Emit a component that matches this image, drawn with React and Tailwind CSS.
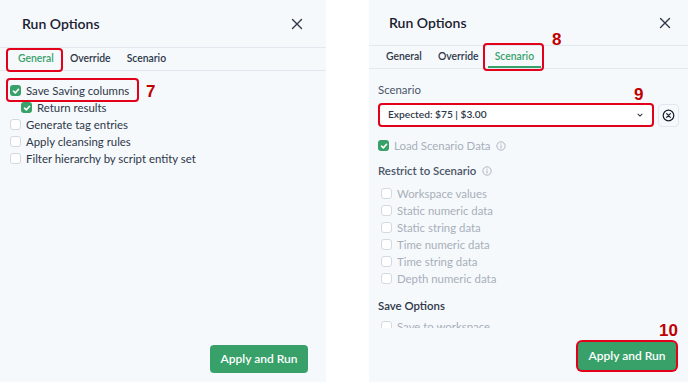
import React from "react";

const FONT = { fontFamily: "Lato, 'Open Sans', sans-serif" };

function Box({ checked }) {
  if (checked) {
    return (
      <span className="w-[11px] h-[11px] rounded-[3px] bg-[#38a169] flex items-center justify-center shrink-0">
        <svg width="8" height="8" viewBox="0 0 12 12">
          <path d="M2.3 6.3 L5 8.8 L9.8 3.4" stroke="white" strokeWidth="2.4" fill="none" strokeLinecap="round" strokeLinejoin="round" />
        </svg>
      </span>
    );
  }
  return <span className="w-[11px] h-[11px] rounded-[3px] border-[1.5px] border-[#d3d9e1] bg-white shrink-0" />;
}

function Row({ label, checked, indent, disabled, info }) {
  return (
    <div className={`flex items-center h-[17px] ${indent ? "pl-[11px]" : ""}`}>
      <Box checked={checked} />
      <span className={`ml-[5px] text-[11.4px] leading-[17px] ${disabled ? "text-[#a7afba]" : "text-[#2d3748]"}`}>{label}</span>
      {info && <Info className="ml-[6px]" />}
    </div>
  );
}

function Info({ className = "" }) {
  return (
    <svg className={className} width="10" height="10" viewBox="0 0 12 12">
      <circle cx="6" cy="6" r="5" fill="none" stroke="#a0aab6" strokeWidth="1" />
      <circle cx="6" cy="3.6" r="0.7" fill="#a0aab6" />
      <path d="M6 5.3 V8.8" stroke="#a0aab6" strokeWidth="1.1" />
    </svg>
  );
}

function Close() {
  return (
    <svg width="12" height="12" viewBox="0 0 12 12">
      <path d="M1.5 1.5 L10.5 10.5 M10.5 1.5 L1.5 10.5" stroke="#2d3748" strokeWidth="1.4" strokeLinecap="round" />
    </svg>
  );
}

function Tabs({ active, pl, underline }) {
  const tabs = ["General", "Override", "Scenario"];
  return (
    <div className={`h-[23px] border-b border-[#e2e8f0] flex items-stretch ${pl}`}>
      {tabs.map((t) => (
        <div key={t} className={`px-[8px] flex items-center text-[10.4px] font-semibold relative ${t === active ? "text-[#38a169]" : "text-[#2d3748]"}`}>
          {t}
          {t === active && underline && <span className="absolute left-[1px] right-[1px] bottom-[0px] h-[2px] bg-[#38a169]" />}
        </div>
      ))}
    </div>
  );
}

function ApplyBtn({ ring }) {
  return (
    <button className={`w-[98px] h-[28px] rounded-[4px] bg-[#38a169] text-white text-[12px] font-semibold flex items-center justify-center ${ring ? "ring-2 ring-[#e3001b]" : ""}`}>
      Apply and Run
    </button>
  );
}

export default function App() {
  return (
    <div className="relative w-[688px] h-[382px] bg-white flex overflow-hidden" style={FONT}>
      {/* Left panel */}
      <div className="w-[326px] h-[382px] bg-[#f6f9fc] flex flex-col">
        <div className="h-[48px] border-b border-[#e2e8f0] flex items-center justify-between pl-[22px] pr-[23px]">
          <span className="text-[14px] font-semibold text-[#1a202c]">Run Options</span>
          <Close />
        </div>
        <Tabs active="General" pl="pl-[10px]" />
        <div className="flex-1 pt-[11px] pl-[10px] flex flex-col">
          <Row label="Save Saving columns" checked />
          <Row label="Return results" checked indent />
          <Row label="Generate tag entries" />
          <Row label="Apply cleansing rules" />
          <Row label="Filter hierarchy by script entity set" />
        </div>
        <div className="flex justify-end pr-[18px] pb-[9px]">
          <ApplyBtn />
        </div>
      </div>

      <div className="w-[43px]" />

      {/* Right panel */}
      <div className="w-[319px] h-[382px] bg-[#f6f9fc] flex flex-col">
        <div className="h-[46px] border-b border-[#e2e8f0] flex items-center justify-between pl-[20px] pr-[17px]">
          <span className="text-[14px] font-semibold text-[#1a202c]">Run Options</span>
          <Close />
        </div>
        <Tabs active="Scenario" pl="pl-[9px]" underline />
        <div className="h-[259px] overflow-hidden pt-[13px] pl-[9px] pr-[9px] flex flex-col">
          <div className="text-[11.4px] leading-[16px] text-[#4a5568]">Scenario</div>
          <div className="mt-[5px] flex items-center gap-[4px]">
            <div className="flex-1 h-[24px] rounded-[4px] border-2 border-[#e3001b] bg-white flex items-center justify-between pl-[8px] pr-[8px]">
              <span className="text-[10.2px] font-semibold text-[#2d3748]">Expected: $75 | $3.00</span>
              <svg width="8" height="8" viewBox="0 0 10 10">
                <path d="M2.5 3.8 L5 6.3 L7.5 3.8" stroke="#2d3748" strokeWidth="1.3" fill="none" strokeLinecap="round" strokeLinejoin="round" />
              </svg>
            </div>
            <div className="w-[21px] h-[23px] rounded-[4px] border border-[#e2e8f0] bg-[#f6f9fc] flex items-center justify-center">
              <svg width="13" height="13" viewBox="0 0 14 14">
                <circle cx="7" cy="7" r="5.7" fill="none" stroke="#1a202c" strokeWidth="1.3" />
                <path d="M5 5 L9 9 M9 5 L5 9" stroke="#1a202c" strokeWidth="1.3" strokeLinecap="round" />
              </svg>
            </div>
          </div>
          <div className="mt-[10px]">
            <Row label="Load Scenario Data" checked disabled info />
          </div>
          <div className="mt-[8px] h-[17px] flex items-center">
            <span className="text-[11.4px] font-semibold text-[#4a5568]">Restrict to Scenario</span>
            <Info className="ml-[6px]" />
          </div>
          <div className="mt-[6px] pl-[3px] flex flex-col">
            <Row label="Workspace values" disabled />
            <Row label="Static numeric data" disabled />
            <Row label="Static string data" disabled />
            <Row label="Time numeric data" disabled />
            <Row label="Time string data" disabled />
            <Row label="Depth numeric data" disabled />
          </div>
          <div className="mt-[10px] h-[17px] flex items-center text-[11.4px] font-semibold text-[#2d3748]">Save Options</div>
          <div className="mt-[4px] pl-[3px]">
            <Row label="Save to workspace" disabled />
          </div>
        </div>
        <div className="flex justify-end pt-[14px] pr-[12px]">
          <ApplyBtn ring />
        </div>
      </div>

      {/* Annotations */}
      <div className="absolute left-[6px] top-[48px] w-[57px] h-[24px] border-2 border-[#e3001b] rounded-[4px]" />
      <div className="absolute left-[6px] top-[78px] w-[133px] h-[24px] border-2 border-[#e3001b] rounded-[4px]" />
      <div className="absolute left-[483px] top-[43px] w-[61px] h-[28px] border-2 border-[#e3001b] rounded-[4px]" />
      <span className="absolute left-[146px] top-[79px] text-[17px] font-bold text-[#c00000]" style={{ fontFamily: "'Liberation Sans', sans-serif" }}>7</span>
      <span className="absolute left-[552px] top-[27px] text-[17px] font-bold text-[#c00000]" style={{ fontFamily: "'Liberation Sans', sans-serif" }}>8</span>
      <span className="absolute left-[634px] top-[82px] text-[17px] font-bold text-[#c00000]" style={{ fontFamily: "'Liberation Sans', sans-serif" }}>9</span>
      <span className="absolute left-[659px] top-[318px] text-[17px] font-bold text-[#c00000]" style={{ fontFamily: "'Liberation Sans', sans-serif" }}>10</span>
    </div>
  );
}
